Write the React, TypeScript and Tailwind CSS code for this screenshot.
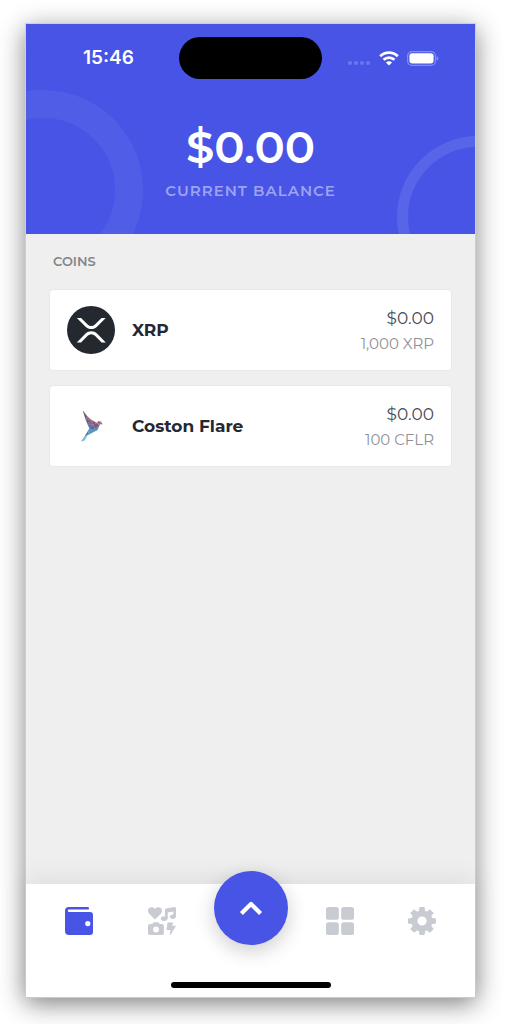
import type { ReactNode } from "react";

function WifiIcon() {
  return (
    <svg viewBox="0 0 20 15" className="h-[15px] w-5" fill="none" stroke="white" strokeWidth="2.7" aria-hidden="true">
      <path d="M1.2 5.3C6.2 0.4 13.8 0.4 18.8 5.3" />
      <path d="M4.5 8.8C7.7 5.8 12.3 5.8 15.5 8.8" />
      <path d="M10 14.4 6.9 11.4C8.6 9.9 11.4 9.9 13.1 11.4Z" fill="white" stroke="none" />
    </svg>
  );
}

function BatteryIcon() {
  return (
    <svg viewBox="0 0 32 15" className="h-[15px] w-8" aria-hidden="true">
      <rect x="0.6" y="0.6" width="27.8" height="13.8" rx="4.4" fill="none" stroke="white" strokeOpacity="0.34" strokeWidth="1.2" />
      <rect x="2.4" y="2.2" width="24.2" height="10.4" rx="3" fill="white" />
      <path d="M29.6 5.2c2.2.6 2.2 4 0 4.6Z" fill="white" fillOpacity="0.38" />
    </svg>
  );
}

function SignalDots() {
  return (
    <svg viewBox="0 0 24 15" className="h-[15px] w-6" fill="white" fillOpacity="0.2" aria-hidden="true">
      <circle cx="3" cy="12" r="2.1" />
      <circle cx="9" cy="12" r="2.1" />
      <circle cx="15" cy="12" r="2.1" />
      <circle cx="21" cy="12" r="2.1" />
    </svg>
  );
}

function XrpLogo() {
  return (
    <svg viewBox="0 0 48 48" className="size-12" aria-hidden="true">
      <circle cx="24" cy="24" r="24" fill="#23292f" />
      <g transform="translate(9.8 11.9) scale(0.0566 0.0578)" fill="white">
        <path d="M437,0h74L357,152.48c-55.77,55.19-146.19,55.19-202,0L.94,0H75L192,115.83a91.11,91.11,0,0,0,127.91,0Z" />
        <path d="M74.05,424H0L155,270.58c55.77-55.19,146.19-55.19,202,0L512,424H438L320,307.23a91.11,91.11,0,0,0-127.91,0Z" />
      </g>
    </svg>
  );
}

function BirdLogo() {
  return (
    <svg viewBox="0 0 48 48" className="size-12" aria-hidden="true">
      <path d="M15.8 8.8 20.4 14.4 18.4 17Z" fill="#6a5478" />
      <path d="M20.4 14.4 24.8 18 18.4 17Z" fill="#a0607a" />
      <path d="M18.4 17 24.8 18 20.4 22Z" fill="#57628f" />
      <path d="M24.8 18 26 22.5 20.4 22Z" fill="#8d5f80" />
      <path d="M24.8 18 29.6 21 26 22.5Z" fill="#6b5474" />
      <path d="M20.4 22 26 22.5 22.4 26.6Z" fill="#53709f" />
      <path d="M26 22.5 29.6 21 32.6 23.6 28 27Z" fill="#765f86" />
      <path d="M29.6 21 31.4 18.9 34 19.4 32.6 23.6Z" fill="#bd6872" />
      <path d="M34 19.4 35.7 22.6 32.6 22Z" fill="#7f748f" />
      <path d="M22.4 26.6 26 22.5 28 27 24 29.5Z" fill="#536b9d" />
      <path d="M28 27 32.6 23.6 30.2 28.2 24 29.5Z" fill="#557fae" />
      <path d="M22.4 26.6 30.2 28.2 20.6 33.2Z" fill="#5799c4" />
      <path d="M22.4 26.6 20.6 33.2 17.6 34.2Z" fill="#477cac" />
      <path d="M17.6 34.2 20.6 33.2 17.6 38.4 13.8 39.4Z" fill="#83b5d4" />
      <path d="M15.8 8.8 26 22.5M18.4 17 29.6 21M20.4 22 26 22.5 28 27" fill="none" stroke="#bd6277" strokeWidth="0.5" />
    </svg>
  );
}

function WalletIcon() {
  return (
    <svg viewBox="0 0 28 28" className="size-7" fill="currentColor" aria-hidden="true">
      <path
        fillRule="evenodd"
        d="M4 0H22.8Q24 0 24 1.2V1.4Q24 2.6 22.8 2.6H4Q2.8 2.6 2.8 3.8T4 5H25Q28 5 28 8V25Q28 28 25 28H4Q0 28 0 24V4Q0 0 4 0ZM22.8 14a2.6 2.6 0 1 0 0 5.2a2.6 2.6 0 0 0 0-5.2Z"
      />
    </svg>
  );
}

function MediaIcon() {
  return (
    <svg viewBox="0 0 28 28" className="size-7" fill="currentColor" aria-hidden="true">
      <path d="M7 12.6 1.2 6.8C-.6 4.8-.3 2.100 1.500.8 3.300-.4 5.700.1 7 1.800 8.300.1 10.700-.4 12.500.8 14.300 2.100 14.600 4.800 12.800 6.800Z" />
      <path d="M18.200 1.400 26.500 0Q28 0 28 1.300V9C28 11 26.600 12 24.900 12S21.900 11.100 21.900 9.800 23.300 7.300 25.400 7.500V4.500L19.800 5.600V11C19.800 13 18.200 14 16.100 14S12.700 12.900 12.700 11.600 14.300 9.100 16.900 9.400V2.800Q16.900 1.700 18.200 1.400Z" />
      <path
        fillRule="evenodd"
        d="M4.300 17 4.900 15.800Q5.200 15.200 6 15.200H9.900Q10.700 15.200 11 15.800L11.600 17H14Q15.900 17 15.900 18.900V26.100Q15.900 28 14 28H1.900Q0 28 0 26.100V18.900Q0 17 1.900 17ZM8 19.600a2.900 2.900 0 1 0 0 5.800a2.900 2.900 0 0 0 0-5.800Z"
      />
      <path d="M20.200 15.400H25.300L24.100 18.800H27.300Q28.100 18.900 27.700 19.600L22.700 27.500Q22 28.200 21.700 27.300L22.700 23H19.100Q18.400 22.900 18.500 22.200L19.400 16Q19.500 15.400 20.200 15.400Z" />
    </svg>
  );
}

function GridIcon() {
  return (
    <svg viewBox="0 0 28 28" className="size-7" fill="currentColor" aria-hidden="true">
      <rect width="12.8" height="12.8" rx="2.6" />
      <rect x="15.2" width="12.8" height="12.8" rx="2.6" />
      <rect y="15.2" width="12.8" height="12.8" rx="2.6" />
      <rect x="15.2" y="15.2" width="12.8" height="12.8" rx="2.6" />
    </svg>
  );
}

function GearIcon() {
  const angles = [0, 45, 90, 135, 180, 225, 270, 315];
  return (
    <svg viewBox="0 0 28 28" className="size-7" fill="currentColor" aria-hidden="true">
      {angles.map((a) => (
        <path key={a} transform={`rotate(${a} 14 14)`} d="M10.800 5.500 11.200 1Q11.300 0 12.300 0H15.700Q16.700 0 16.800 1L17.200 5.500Z" />
      ))}
      <circle cx="14" cy="14" r="7.600" fill="none" stroke="currentColor" strokeWidth="6" />
    </svg>
  );
}

type Coin = { name: string; value: string; amount: string; logo: ReactNode };

const coins: Coin[] = [
  { name: "XRP", value: "$0.00", amount: "1,000 XRP", logo: <XrpLogo /> },
  { name: "Coston Flare", value: "$0.00", amount: "100 CFLR", logo: <BirdLogo /> },
];

function CoinRow({ coin }: { coin: Coin }) {
  return (
    <li className="flex items-center rounded border border-[#e8e9ee] bg-white px-[17px] py-4">
      {coin.logo}
      <h3 className="ml-[17px] flex-1 text-[17px] leading-6 font-bold text-[#252733]">{coin.name}</h3>
      <div className="text-right">
        <p className="text-[17px] leading-6 text-[#494a54]">{coin.value}</p>
        <p className="mt-1 text-[15px] leading-5 text-[#8f9097]">{coin.amount}</p>
      </div>
    </li>
  );
}

function NavButton({ label, active, children }: { label: string; active?: boolean; children: ReactNode }) {
  return (
    <button type="button" aria-label={label} className={active ? "text-[#4754e6]" : "text-[#c8cbd1]"}>
      {children}
    </button>
  );
}

export default function App() {
  return (
    <div className="flex min-h-screen flex-col bg-white pt-[23px] pr-[29px] pb-[26px] pl-[25px] font-['Montserrat','Inter',sans-serif]">
      <div className="flex flex-1 flex-col border border-[#cfcfd3] bg-[#efefef] shadow-[0_6px_24px_rgba(0,0,0,0.48)]">
        <header className="relative overflow-hidden bg-[#4754e6] pt-[13px] pb-8 text-center">
          <div className="absolute -left-[83px] top-[66px] size-[200px] rounded-full border-[28px] border-white/5" />
          <div className="absolute -right-[84px] top-[112px] size-[162px] rounded-full border-[11px] border-white/10" />
          <div className="relative grid grid-cols-[1fr_143px_1fr] items-center">
            <time className="pl-3 font-['Inter',sans-serif] text-[19px] leading-6 font-semibold text-white">15:46</time>
            <div className="h-[42px] rounded-full bg-black" />
            <div className="flex items-center justify-end gap-2 pr-9">
              <SignalDots />
              <WifiIcon />
              <BatteryIcon />
            </div>
          </div>
          <h1 className="relative mt-[39px] text-[45px] leading-[58px] font-semibold text-white">$0.00</h1>
          <p className="relative mt-1 text-[15px] leading-[22px] font-semibold tracking-[1px] text-[#9ca3f1]">CURRENT BALANCE</p>
        </header>

        <main className="flex-1 px-[23px] pt-[17px] pb-8">
          <h2 className="px-1 text-[13px] leading-5 font-semibold text-[#85868c]">COINS</h2>
          <ul className="mt-[18px] flex flex-col gap-[14px]">
            {coins.map((coin) => (
              <CoinRow key={coin.name} coin={coin} />
            ))}
          </ul>
        </main>

        <footer className="bg-white pb-[9px] shadow-[0_-6px_24px_rgba(0,0,0,0.07)]">
          <nav aria-label="Main" className="flex items-center">
            <div className="flex flex-1 justify-between pt-[13px] pr-[38px] pl-[39px]">
              <NavButton label="Wallet" active>
                <WalletIcon />
              </NavButton>
              <NavButton label="Collectibles">
                <MediaIcon />
              </NavButton>
            </div>
            <button
              type="button"
              aria-label="Open actions"
              className="-mt-[13px] flex size-[74px] items-center justify-center rounded-full bg-[#4754e6] shadow-[0_6px_20px_rgba(0,0,0,0.2)]"
            >
              <svg viewBox="0 0 24 24" className="size-6" fill="none" stroke="white" strokeWidth="4.200" strokeLinejoin="round" aria-hidden="true">
                <path d="M2.400 17.500 12 8l9.600 9.500" />
              </svg>
            </button>
            <div className="flex flex-1 justify-between pt-[13px] pr-[39px] pl-[38px]">
              <NavButton label="Apps">
                <GridIcon />
              </NavButton>
              <NavButton label="Settings">
                <GearIcon />
              </NavButton>
            </div>
          </nav>
          <div className="mx-auto mt-[37px] h-1.5 w-40 rounded-full bg-black" />
        </footer>
      </div>
    </div>
  );
}
